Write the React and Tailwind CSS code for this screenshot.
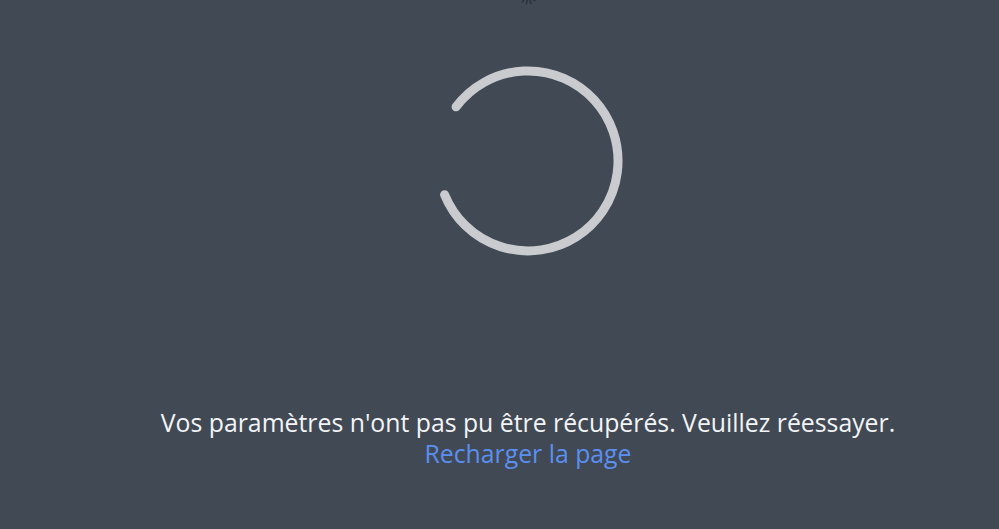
import React from 'react';

const Spinner = () => (
  <svg width="200" height="200" viewBox="0 0 200 200" className="block">
    {/* arc from ~217deg going clockwise round to ~158deg, radius 90 */}
    <path
      d="M 28.1 45.8 A 90 90 0 1 1 16.6 133.7"
      fill="none"
      stroke="#c9cbce"
      strokeWidth="9"
      strokeLinecap="round"
    />
  </svg>
);

const SmallSpinner = () => (
  <svg width="24" height="24" viewBox="0 0 24 24" className="block">
    {[200, 230, 260, 290, 320, 150].map((a, i) => {
      const r = (a * Math.PI) / 180;
      return (
        <line
          key={i}
          x1={12 + Math.cos(r) * 4}
          y1={12 - Math.sin(r) * 4}
          x2={12 + Math.cos(r) * 9}
          y2={12 - Math.sin(r) * 9}
          stroke="#2d333b"
          strokeWidth="1.5"
          strokeLinecap="round"
        />
      );
    })}
  </svg>
);

export default function App() {
  return (
    <div className="w-full h-[529px] bg-[#414954] overflow-hidden flex flex-col items-center pl-[57px] font-['Open_Sans',sans-serif]">
      <div className="-mt-[17px] h-[24px]">
        <SmallSpinner />
      </div>
      <div className="mt-[54px]">
        <Spinner />
      </div>
      <div className="mt-[146px] text-center text-[24.8px] leading-[31px]">
        <p className="text-[#f3f4f6]">Vos paramètres n'ont pas pu être récupérés. Veuillez réessayer.</p>
        <a href="#" className="text-[#5b8ff0]">Recharger la page</a>
      </div>
    </div>
  );
}
